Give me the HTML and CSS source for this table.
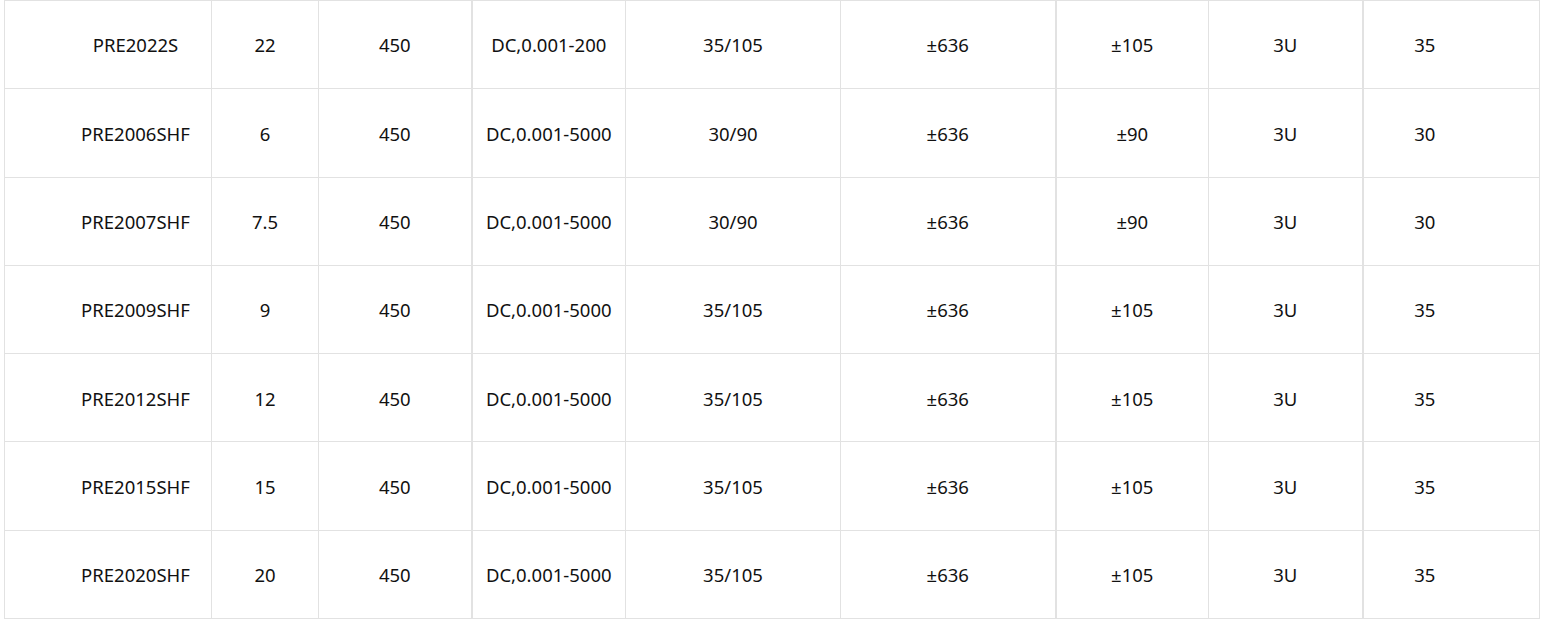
FILE: index.html
```html
<!DOCTYPE html>
<html lang="zh">
<head>
<meta charset="utf-8">
<title>Specs</title>
<link rel="stylesheet" href="styles.css">
</head>
<body>
<table class="spec">
  <colgroup>
    <col class="c1"><col class="c2"><col class="c3"><col class="c4"><col class="c5"><col class="c6"><col class="c7"><col class="c8"><col class="c9">
  </colgroup>
  <tbody>
    <tr><td class="first">PRE2022S</td><td>22</td><td>450</td><td class="thick">DC,0.001-200</td><td>35/105</td><td>±636</td><td class="thick">±105</td><td>3U</td><td class="thick last">35</td></tr>
    <tr><td class="first">PRE2006SHF</td><td>6</td><td>450</td><td class="thick">DC,0.001-5000</td><td>30/90</td><td>±636</td><td class="thick">±90</td><td>3U</td><td class="thick last">30</td></tr>
    <tr><td class="first">PRE2007SHF</td><td>7.5</td><td>450</td><td class="thick">DC,0.001-5000</td><td>30/90</td><td>±636</td><td class="thick">±90</td><td>3U</td><td class="thick last">30</td></tr>
    <tr><td class="first">PRE2009SHF</td><td>9</td><td>450</td><td class="thick">DC,0.001-5000</td><td>35/105</td><td>±636</td><td class="thick">±105</td><td>3U</td><td class="thick last">35</td></tr>
    <tr><td class="first">PRE2012SHF</td><td>12</td><td>450</td><td class="thick">DC,0.001-5000</td><td>35/105</td><td>±636</td><td class="thick">±105</td><td>3U</td><td class="thick last">35</td></tr>
    <tr><td class="first">PRE2015SHF</td><td>15</td><td>450</td><td class="thick">DC,0.001-5000</td><td>35/105</td><td>±636</td><td class="thick">±105</td><td>3U</td><td class="thick last">35</td></tr>
    <tr><td class="first">PRE2020SHF</td><td>20</td><td>450</td><td class="thick">DC,0.001-5000</td><td>35/105</td><td>±636</td><td class="thick">±105</td><td>3U</td><td class="thick last">35</td></tr>
  </tbody>
</table>
</body>
</html>
```

FILE: styles.css
```css
html, body {
  margin: 0;
  padding: 0;
  background: #ffffff;
}

body {
  padding-left: 4px;
  font-family: "Noto Sans", "Noto Sans CJK SC", sans-serif;
  font-size: 18.5px;
  color: #111111;
}

.spec {
  border-collapse: collapse;
  table-layout: fixed;
  width: 1535px;
}

.c1 { width: 207px; }
.c2 { width: 107px; }
.c3 { width: 153px; }
.c4 { width: 154px; }
.c5 { width: 215px; }
.c6 { width: 215px; }
.c7 { width: 153px; }
.c8 { width: 154px; }
.c9 { width: 177px; }

.spec td {
  border: 1px solid #e2e2e2;
  height: 85.3px;
  padding: 2px 0 0 0;
  line-height: 1;
  text-align: center;
  vertical-align: middle;
  white-space: nowrap;
}

.spec td.thick {
  border-left: 2px solid #e2e2e2;
}

.spec td.first {
  padding-left: 55px;
}

.spec td.last {
  padding-right: 53px;
}
```
